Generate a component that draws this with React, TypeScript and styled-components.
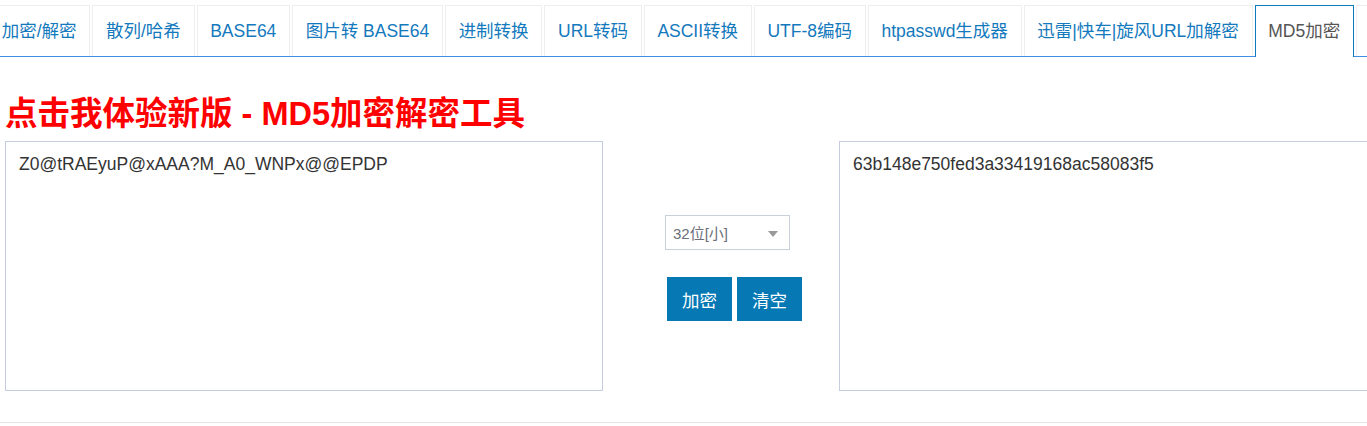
import React from "react";
import styled, { createGlobalStyle } from "styled-components";

const GlobalStyle = createGlobalStyle`
  html, body {
    margin: 0;
    padding: 0;
    background: #ffffff;
    overflow: hidden;
  }
  body {
    font-family: "Liberation Sans", "Noto Sans CJK SC", sans-serif;
    color: #333333;
  }
`;

const Page = styled.div`
  width: 100vw;
  overflow: hidden;
`;

const TabBar = styled.ul`
  display: flex;
  align-items: flex-end;
  flex-wrap: nowrap;
  list-style: none;
  margin: 5px 0 0 -12px;
  padding: 0;
  height: 51px;
  border-bottom: 1px solid #3f8fe2;
  white-space: nowrap;
`;

const Tab = styled.li<{ $active?: boolean }>`
  flex: none;
  box-sizing: border-box;
  height: ${(p) => (p.$active ? "52px" : "51px")};
  margin: 0 2px ${(p) => (p.$active ? "-1px" : "0")} 0;
  padding: 0 12.7px;
  border: 1px solid ${(p) => (p.$active ? "#0b7bc0" : "#eeeeee")};
  border-bottom: none;
  background: #ffffff;
  font-size: 17.5px;
  line-height: 50px;
  color: ${(p) => (p.$active ? "#555555" : "#1479bd")};
  cursor: pointer;
`;

const Content = styled.div`
  padding: 0 5px;
`;

const Heading = styled.h2`
  margin: 37px 0 7px 0;
  font-size: 32.5px;
  line-height: 40px;
  font-weight: bold;
  color: #ff0000;
  white-space: nowrap;
`;

const Row = styled.div`
  display: flex;
  align-items: flex-start;
  flex-wrap: nowrap;
`;

const TextBox = styled.textarea`
  flex: none;
  box-sizing: border-box;
  width: 598px;
  height: 250px;
  margin: 0;
  padding: 10px 13px;
  border: 1px solid #c6cddf;
  border-radius: 0;
  resize: none;
  outline: none;
  font-family: "Liberation Sans", "Noto Sans CJK SC", sans-serif;
  font-size: 17.5px;
  line-height: 25px;
  color: #333333;
  background: #ffffff;
`;

const Middle = styled.div`
  flex: none;
  box-sizing: border-box;
  width: 236px;
  padding: 74px 0 0 62px;
  display: flex;
  flex-direction: column;
  align-items: flex-start;
`;

const Select = styled.div`
  box-sizing: border-box;
  width: 125px;
  height: 35px;
  border: 1px solid #c9d0dc;
  display: flex;
  align-items: center;
  justify-content: space-between;
  padding: 0 11px 0 7px;
  font-size: 15px;
  color: #6a6f78;
  background: #ffffff;
`;

const Caret = styled.span`
  width: 0;
  height: 0;
  border-left: 5px solid transparent;
  border-right: 5px solid transparent;
  border-top: 6px solid #999999;
  margin-top: 2px;
`;

const Buttons = styled.div`
  display: flex;
  gap: 5px;
  margin: 27px 0 0 2px;
`;

const Button = styled.button`
  box-sizing: border-box;
  width: 65px;
  height: 44px;
  margin: 0;
  padding: 0;
  border: none;
  border-radius: 0;
  background: #0679b5;
  color: #ffffff;
  font-family: "Liberation Sans", "Noto Sans CJK SC", sans-serif;
  font-size: 17.5px;
  cursor: pointer;
`;

const Divider = styled.div`
  margin-top: 31px;
  height: 1px;
  background: #e5e5e5;
`;

const tabs = [
  "加密/解密",
  "散列/哈希",
  "BASE64",
  "图片转 BASE64",
  "进制转换",
  "URL转码",
  "ASCII转换",
  "UTF-8编码",
  "htpasswd生成器",
  "迅雷|快车|旋风URL加解密",
  "MD5加密",
];

export default function App() {
  return (
    <Page>
      <GlobalStyle />
      <TabBar>
        {tabs.map((t) => (
          <Tab key={t} $active={t === "MD5加密"}>
            {t}
          </Tab>
        ))}
        <Tab aria-hidden="true" />
      </TabBar>
      <Content>
        <Heading>点击我体验新版 - MD5加密解密工具</Heading>
        <Row>
          <TextBox readOnly value="Z0@tRAEyuP@xAAA?M_A0_WNPx@@EPDP" />
          <Middle>
            <Select>
              <span>32位[小]</span>
              <Caret />
            </Select>
            <Buttons>
              <Button>加密</Button>
              <Button>清空</Button>
            </Buttons>
          </Middle>
          <TextBox readOnly value="63b148e750fed3a33419168ac58083f5" />
        </Row>
      </Content>
      <Divider />
    </Page>
  );
}
